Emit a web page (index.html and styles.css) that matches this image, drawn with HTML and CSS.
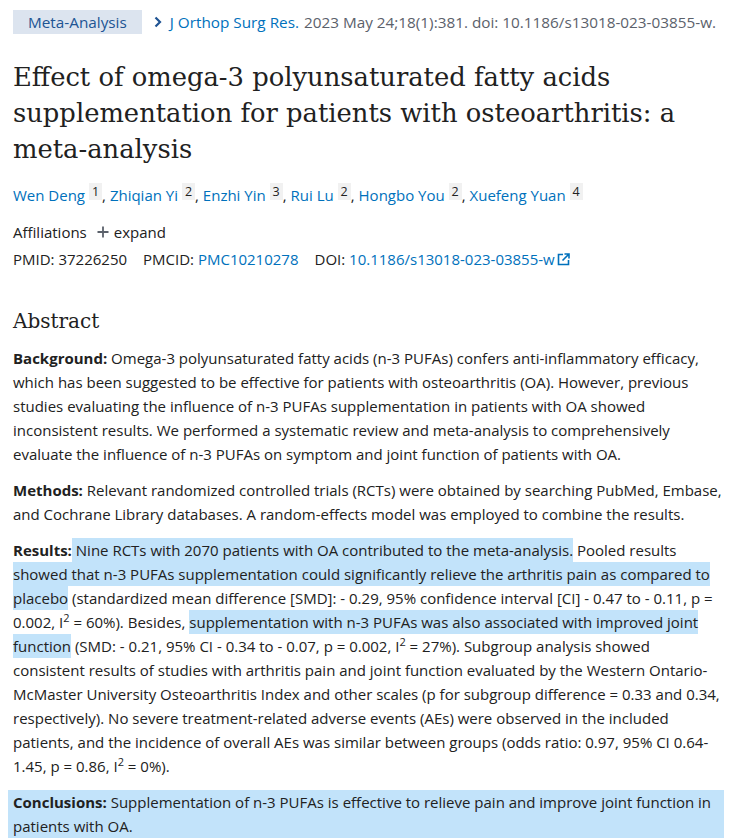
FILE: index.html
```html
<!DOCTYPE html>
<html>
<head>
<meta charset="utf-8">
<link rel="stylesheet" href="styles.css">
</head>
<body>
<main class="page">
  <div class="crumbs">
    <span class="badge">Meta-Analysis</span>
    <span class="chev"><svg width="10" height="12" viewBox="0 0 10 12"><path d="M2.5 1.5 L7 6 L2.5 10.5" fill="none" stroke="#205493" stroke-width="2.2"/></svg></span>
    <span class="journal">J Orthop Surg Res.</span>
    <span class="cite">2023 May 24;18(1):381. doi: 10.1186/s13018-023-03855-w.</span>
  </div>

  <h1 class="title">Effect of omega-3 polyunsaturated fatty acids supplementation for patients with osteoarthritis: a meta-analysis</h1>

  <div class="authors">
    <a class="au">Wen Deng</a> <sup class="aff">1</sup>, <a class="au">Zhiqian Yi</a> <sup class="aff">2</sup>, <a class="au">Enzhi Yin</a> <sup class="aff">3</sup>, <a class="au">Rui Lu</a> <sup class="aff">2</sup>, <a class="au">Hongbo You</a> <sup class="aff">2</sup>, <a class="au">Xuefeng Yuan</a> <sup class="aff">4</sup>
  </div>

  <div class="affil">
    <span>Affiliations</span>
    <span class="expand"><svg width="12" height="12" viewBox="0 0 12 12"><path d="M6 0.5 V11.5 M0.5 6 H11.5" stroke="#5b616b" stroke-width="1.8"/></svg> expand</span>
  </div>

  <div class="ids">
    <span class="id">PMID: 37226250</span>
    <span class="id">PMCID: <a class="lnk">PMC10210278</a></span>
    <span class="id">DOI: <a class="lnk">10.1186/s13018-023-03855-w</a><svg class="ext" width="13" height="13" viewBox="0 0 13 13"><path d="M6 1.5 H1.5 V11.5 H11.5 V7" fill="none" stroke="#0071bc" stroke-width="1.6"/><path d="M7.5 1 H12 V5.5 M12 1 L5.5 7.5" fill="none" stroke="#0071bc" stroke-width="1.6"/></svg></span>
  </div>

  <h2 class="abs-h">Abstract</h2>

  <p class="para"><b>Background: </b>Omega-3 polyunsaturated fatty acids (n-3 PUFAs) confers anti-inflammatory efficacy, which has been suggested to be effective for patients with osteoarthritis (OA). However, previous studies evaluating the influence of n-3 PUFAs supplementation in patients with OA showed inconsistent results. We performed a systematic review and meta-analysis to comprehensively evaluate the influence of n-3 PUFAs on symptom and joint function of patients with OA.</p>

  <p class="para"><b>Methods: </b>Relevant randomized controlled trials (RCTs) were obtained by searching PubMed, Embase, and Cochrane Library databases. A random-effects model was employed to combine the results.</p>

  <p class="para"><b>Results:</b><span class="hl"> Nine RCTs with 2070 patients with OA contributed to the meta-analysis.</span> Pooled results <span class="hl">showed that n-3 PUFAs supplementation could significantly relieve the arthritis pain as compared to placebo</span> (standardized mean difference [SMD]: - 0.29, 95% confidence interval [CI] - 0.47 to - 0.11, p = 0.002, I<sup class="sq">2</sup> = 60%). Besides, <span class="hl">supplementation with n-3 PUFAs was also associated with improved joint function</span> (SMD: - 0.21, 95% CI - 0.34 to - 0.07, p = 0.002, I<sup class="sq">2</sup> = 27%). Subgroup analysis showed consistent results of studies with arthritis pain and joint function evaluated by the Western Ontario-McMaster University Osteoarthritis Index and other scales (p for subgroup difference = 0.33 and 0.34, respectively). No severe treatment-related adverse events (AEs) were observed in the included patients, and the incidence of overall AEs was similar between groups (odds ratio: 0.97, 95% CI 0.64-1.45, p = 0.86, I<sup class="sq">2</sup> = 0%).</p>

  <p class="para concl"><b>Conclusions: </b>Supplementation of n-3 PUFAs is effective to relieve pain and improve joint function in patients with OA.</p>
</main>
</body>
</html>
```

FILE: styles.css
```css
html, body {
  margin: 0;
  padding: 0;
  background: #ffffff;
}
body {
  font-family: "Open Sans", "Noto Sans", sans-serif;
  color: #212121;
  font-size: 15px;
}
.page {
  padding: 10px 12px 0 13px;
}
.crumbs {
  display: flex;
  align-items: center;
  height: 24px;
  font-size: 15.3px;
  white-space: nowrap;
}
.badge {
  background: #dce4ef;
  color: #205493;
  height: 24px;
  line-height: 24px;
  padding: 0 15px;
}
.chev {
  display: inline-flex;
  margin-left: 11px;
  margin-right: 7px;
}
.journal {
  color: #0071bc;
  margin-right: 5px;
}
.cite {
  color: #5b616b;
}
.title {
  font-family: "DejaVu Serif", serif;
  font-weight: normal;
  font-size: 25.8px;
  line-height: 36px;
  margin: 25px 0 0 0;
  color: #212121;
}
.authors {
  margin-top: 16px;
  line-height: 24px;
  color: #212121;
}
.au {
  color: #0071bc;
}
.aff {
  display: inline-block;
  background: #f1f1f1;
  color: #212121;
  font-size: 12.5px;
  line-height: 17px;
  padding: 0 3px;
  vertical-align: 5px;
}
.affil {
  margin-top: 13px;
  line-height: 24px;
  display: flex;
  gap: 10px;
  align-items: center;
}
.expand {
  display: inline-flex;
  align-items: center;
  gap: 5px;
}
.ids {
  margin-top: 3px;
  line-height: 24px;
  display: flex;
  gap: 16px;
}
.lnk {
  color: #0071bc;
}
.ext {
  margin-left: 2px;
  vertical-align: -1px;
}
.abs-h {
  font-family: "DejaVu Serif", serif;
  font-weight: normal;
  font-size: 20px;
  line-height: 30px;
  margin: 35px 0 0 0;
}
.para {
  line-height: 24px;
  margin: 12px 0 0 0;
}
.abs-h + .para {
  margin-top: 10px;
}
.para b {
  font-weight: bold;
}
.hl {
  background: #c2e3fa;
  padding: 2px 0;
}
.sq {
  font-size: 11px;
  line-height: 0;
  vertical-align: 6px;
}
.concl {
  background: #c2e3fa;
  margin-left: -5px;
  padding-left: 5px;
  margin-right: -2px;
}
```
